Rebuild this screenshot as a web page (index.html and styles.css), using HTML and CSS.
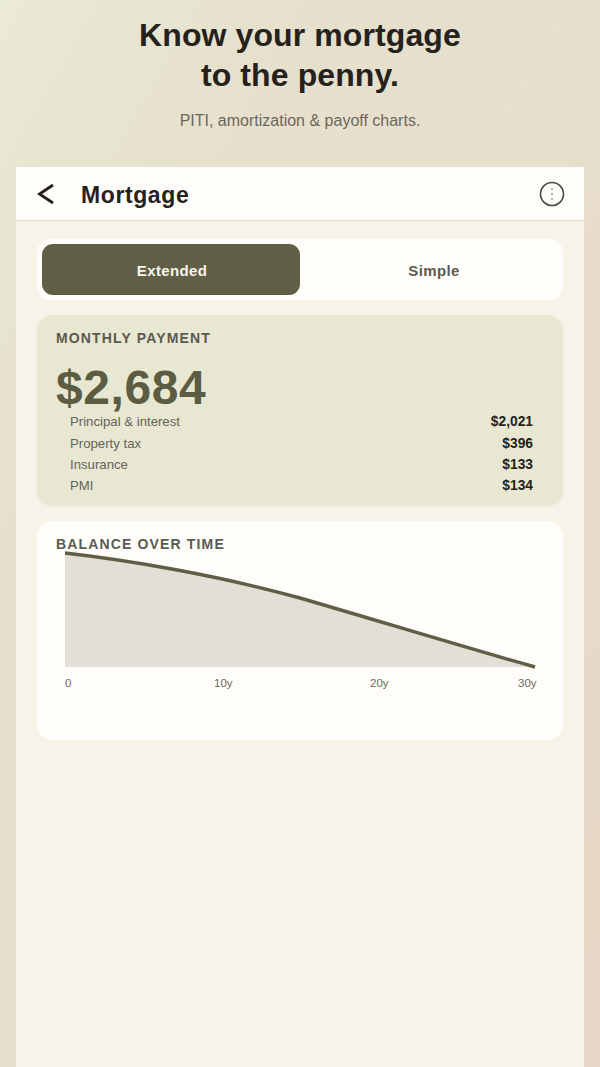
FILE: index.html
```html
<!DOCTYPE html>
<html lang="en">
<head>
<meta charset="utf-8">
<title>Mortgage</title>
<link rel="stylesheet" href="styles.css">
</head>
<body>
<header class="hero">
  <h1>Know your mortgage<br>to the penny.</h1>
  <p>PITI, amortization &amp; payoff charts.</p>
</header>
<main class="phone">
  <div class="topbar">
    <svg class="back" width="20" height="24" viewBox="0 0 20 24"><path d="M17 3 L3.5 12 L17 21" fill="none" stroke="#24211c" stroke-width="2.8"/></svg>
    <h2>Mortgage</h2>
    <svg class="more" width="26" height="26" viewBox="0 0 26 26"><circle cx="13" cy="13" r="11.5" fill="none" stroke="#4a4842" stroke-width="1.6"/><circle cx="13" cy="8" r="0.8" fill="#4a4842"/><circle cx="13" cy="13" r="0.8" fill="#4a4842"/><circle cx="13" cy="18" r="0.8" fill="#4a4842"/></svg>
  </div>
  <div class="content">
    <div class="tabs">
      <div class="tab active">Extended</div>
      <div class="tab">Simple</div>
    </div>
    <section class="card payment">
      <div class="label">MONTHLY PAYMENT</div>
      <div class="amount">$2,684</div>
      <div class="rows">
        <div class="row"><span>Principal &amp; interest</span><b>$2,021</b></div>
        <div class="row"><span>Property tax</span><b>$396</b></div>
        <div class="row"><span>Insurance</span><b>$133</b></div>
        <div class="row"><span>PMI</span><b>$134</b></div>
      </div>
    </section>
    <section class="card balance">
      <div class="label">BALANCE OVER TIME</div>
      <svg class="chart" width="526" height="120" viewBox="0 0 526 120">
        <path d="M28 2 C 90 9, 180 24, 263 47 C 342 70, 430 97, 498 116 L28 116 Z" fill="#e2dfd7"/>
        <path d="M28 2 C 90 9, 180 24, 263 47 C 342 70, 430 97, 498 116" fill="none" stroke="#5e5f44" stroke-width="3.4"/>
      </svg>
      <div class="axis"><span>0</span><span>10y</span><span>20y</span><span>30y</span></div>
    </section>
  </div>
</main>
</body>
</html>
```
FILE: styles.css
```css
* { box-sizing: border-box; }
html, body { margin: 0; height: 100%; }
body {
  width: 600px;
  height: 1067px;
  overflow: hidden;
  font-family: "Liberation Sans", Arial, sans-serif;
  background: linear-gradient(120deg, #e9ead7 0%, #e6e0cc 25%, #e8dfce 47%, #e6dac8 73%, #e8d7c6 100%);
  display: flex;
  flex-direction: column;
}
.hero { height: 167px; padding-top: 15px; text-align: center; }
.hero h1 {
  margin: 0;
  font-size: 32px;
  line-height: 40px;
  letter-spacing: 0.1px;
  font-weight: 700;
  color: #25221c;
}
.hero p { margin: 16px 0 0; font-size: 16px; line-height: 20px; color: #6b675c; }
.phone {
  flex: 1;
  margin: 0 16px;
  background: #f6f3e8;
  display: flex;
  flex-direction: column;
}
.topbar {
  height: 54px;
  background: #fefdf9;
  border-bottom: 1px solid #e3dcd0;
  display: flex;
  align-items: center;
  padding: 0 19px 0 20px;
}
.topbar h2 { margin: 2px 0 0 25px; font-size: 23px; line-height: 28px; font-weight: 700; letter-spacing: 0.6px; color: #25221c; flex: 1; }
.content { padding: 18px 21px 0; display: flex; flex-direction: column; }
.tabs {
  height: 61px;
  padding: 5px;
  border-radius: 14px;
  background: #fefdf9;
  display: grid;
  grid-template-columns: 258px 1fr;
}
.tab {
  display: flex;
  align-items: center;
  justify-content: center;
  padding: 2px 0 0 10px;
  font-size: 15px;
  font-weight: 700;
  letter-spacing: 0.35px;
  color: #5c5a52;
  border-radius: 11px;
}
.tab.active { background: #605f45; color: #f8f6ec; padding-left: 2px; }
.card { border-radius: 16px; }
.label { font-size: 14px; font-weight: 700; letter-spacing: 1.15px; line-height: 16px; color: #5c5a4e; }
.payment {
  margin-top: 15px;
  height: 190px;
  background: #e8e7d1;
  padding: 15px 30px 0 19px;
  box-shadow: 0 1px 3px rgba(90, 85, 60, 0.1);
}
.amount { margin-top: 15px; font-size: 48px; line-height: 54px; font-weight: 700; letter-spacing: 0.6px; color: #5c5c42; }
.rows { padding-left: 14px; margin-top: -4px; }
.row { display: flex; justify-content: space-between; height: 21.4px; align-items: center; font-size: 13.2px; color: #66635a; }
.row b { color: #25221c; font-size: 13.8px; }
.balance {
  margin-top: 16px;
  height: 219px;
  background: #fefdf9;
  padding-top: 15px;
}
.balance .label { padding-left: 19px; color: #5c5a52; }
.chart { display: block; margin-top: -1px; }
.axis {
  display: grid;
  grid-template-columns: 149px 156px 148px auto;
  padding: 5px 0 0 28px;
  font-size: 11.5px;
  line-height: 14px;
  color: #6d6a60;
}
```
